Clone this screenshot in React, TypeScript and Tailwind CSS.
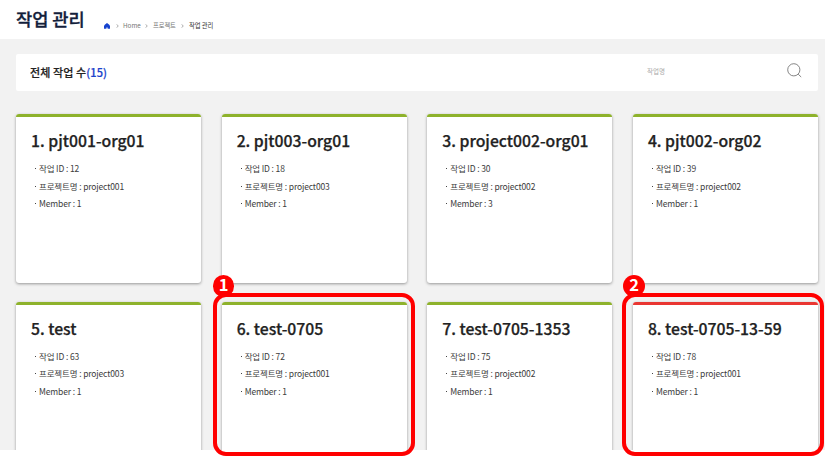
const jobs = [
  { name: 'pjt001-org01', id: 12, project: 'project001', members: 1 },
  { name: 'pjt003-org01', id: 18, project: 'project003', members: 1 },
  { name: 'project002-org01', id: 30, project: 'project002', members: 3 },
  { name: 'pjt002-org02', id: 39, project: 'project002', members: 1 },
  { name: 'test', id: 63, project: 'project003', members: 1 },
  { name: 'test-0705', id: 72, project: 'project001', members: 1 },
  { name: 'test-0705-1353', id: 75, project: 'project002', members: 1 },
  { name: 'test-0705-13-59', id: 78, project: 'project001', members: 1, failed: true },
];

type Job = (typeof jobs)[number];

function Callout({ value, className, badgeClass }: { value: number; className: string; badgeClass: string }) {
  return (
    <div className={`absolute top-[293px] h-[163px] w-[202px] rounded-[13px] border-4 border-[#ff0000] ${className}`}>
      <div className={`absolute -top-[22px] flex h-[22px] items-center justify-center rounded-full bg-[#ff0000] pb-[3px] text-[16.5px] leading-none font-bold text-white ${badgeClass}`}>
        {value}
      </div>
    </div>
  );
}

function Card({ job, index }: { job: Job; index: number }) {
  return (
    <article className="h-[169px] rounded-[3px] bg-white shadow-[0_1px_3px_rgba(0,0,0,0.38)]">
      <div className={`h-[3px] rounded-t-[3px] ${job.failed ? 'bg-[#e93631]' : 'bg-[#8eb22c]'}`} />
      <div className="pt-[12px] pl-[15px]">
        <h2 className="h-6 text-[15.75px] leading-6 font-medium whitespace-nowrap text-[#222] [-webkit-text-stroke:0.25px_#222]">{index}. {job.name}</h2>
        <ul className="mt-[7px] pl-[3px] text-[8.5px] leading-[17.5px] tracking-[-0.14px] text-[#3c3c3c]">
          {[`작업 ID : ${job.id}`, `프로젝트명 : ${job.project}`, `Member : ${job.members}`].map((text) => (
            <li key={text} className="flex items-center whitespace-nowrap">
              <span className="mr-[3px] ml-[1px] h-px w-px bg-[#444]" />
              {text}
            </li>
          ))}
        </ul>
      </div>
    </article>
  );
}

function Chevron() {
  return (
    <svg className="h-1 w-[3px]" viewBox="0 0 3 4" fill="none" stroke="#888" strokeWidth=".7">
      <path d="M.5.3 2.3 2 .5 3.7" />
    </svg>
  );
}

export default function App() {
  return (
    <div className="relative h-[456px] w-[825px] overflow-hidden bg-white font-['Noto_Sans_CJK_KR',sans-serif]">
      <header className="flex h-[39px] items-start pl-4">
        <h1 className="w-[88px] pt-[6px] text-[17.6px] leading-[26px] font-medium whitespace-nowrap text-[#12203b] [-webkit-text-stroke:0.3px_#12203b]">작업 관리</h1>
        <nav className="mt-[21px] flex h-[10px] items-center text-[6.3px] leading-[10px] whitespace-nowrap text-[#777]">
          <svg className="-mt-px mr-[6px] h-[6px] w-[6px]" viewBox="0 0 6 6" fill="#1643ce">
            <path d="M3 0Q6 2 6 3v2.7H3.6V4.6H2.4v1.1H0V3Q0 2 3 0Z" />
          </svg>
          <Chevron />
          <span className="ml-[4px] w-[22px]">Home</span>
          <Chevron />
          <span className="ml-[5px] w-[28px] tracking-[-0.1px]">프로젝트</span>
          <Chevron />
          <span className="ml-[5px] tracking-[-0.1px] text-[#333]">작업 관리</span>
        </nav>
      </header>
      <main className="h-[411px] overflow-hidden bg-[#f2f2f2] pt-[15px] pr-[7px] pl-4">
        <section className="flex h-[37px] items-center rounded-[2px] bg-white pr-4 pl-[14px]">
          <h2 className="-mt-[2px] text-[11px] leading-4 font-medium tracking-[0.1px] text-[#222] [-webkit-text-stroke:0.2px_#222]">전체 작업 수<span className="text-[#1b43cb] [-webkit-text-stroke:0.2px_#1b43cb]">(15)</span></h2>
          <span className="-mt-[2px] ml-auto w-[140px] text-[6.5px] text-[#aaa]">작업명</span>
          <svg className="-mt-1 h-[15px] w-[15px]" viewBox="0 0 15 15" fill="none" stroke="#777" strokeWidth=".9">
            <circle cx="6.8" cy="6.8" r="6.1" />
            <path d="m11.2 11.2 3 2.8" />
          </svg>
        </section>
        <div className="mt-[23px] grid grid-cols-4 gap-x-[20.5px] gap-y-[18.5px]">
          {jobs.map((job, i) => <Card key={job.id} job={job} index={i + 1} />)}
        </div>
      </main>
      <Callout value={1} className="left-[213px]" badgeClass="-left-[4px] w-[21px]" />
      <Callout value={2} className="left-[622px]" badgeClass="-left-[3px] w-[22px]" />
    </div>
  );
}
